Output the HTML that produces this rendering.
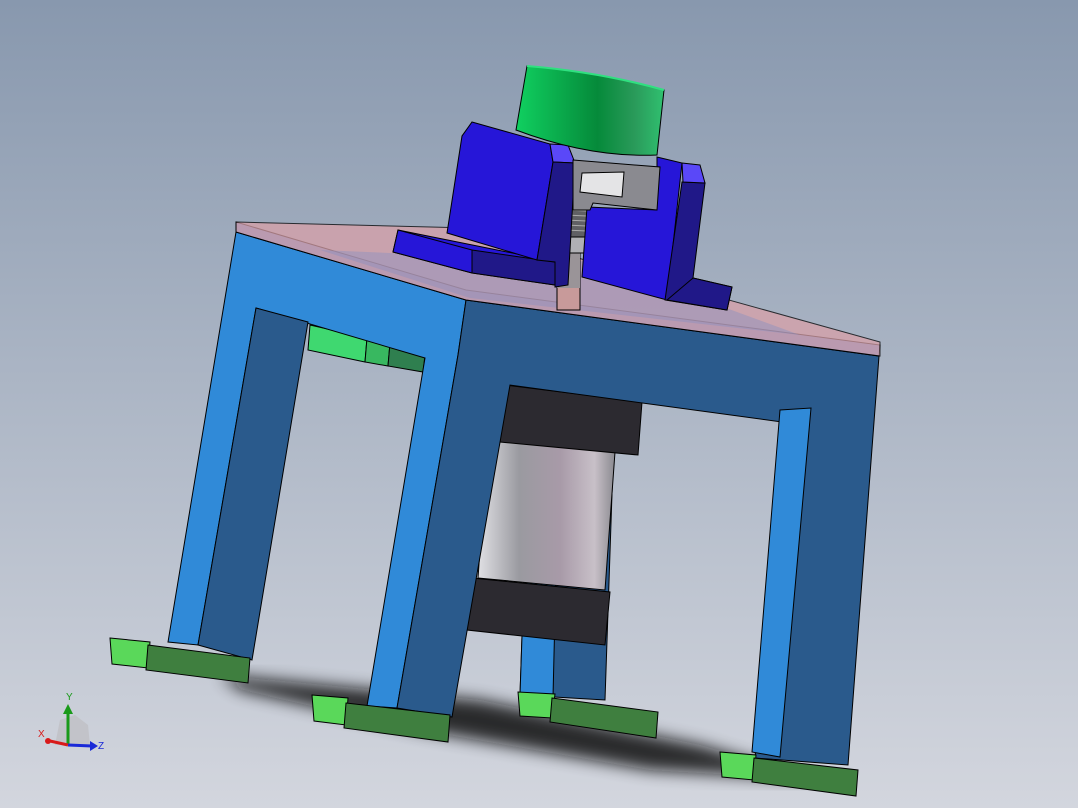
<!DOCTYPE html>
<html><head><meta charset="utf-8"><style>
html,body{margin:0;padding:0;width:1078px;height:808px;overflow:hidden}
svg{display:block}
</style></head><body>
<svg width="1078" height="808" viewBox="0 0 1078 808" xmlns="http://www.w3.org/2000/svg" font-family="Liberation Sans, sans-serif">
<defs>
<linearGradient id="bg" x1="0" y1="0" x2="0" y2="1">
<stop offset="0" stop-color="#8898ae"/><stop offset="1" stop-color="#d3d6de"/></linearGradient>
<linearGradient id="cyl" x1="0" y1="0" x2="1" y2="0">
<stop offset="0" stop-color="#e0e0e4"/><stop offset="0.3" stop-color="#9a9aa0"/><stop offset="0.6" stop-color="#a89aa8"/><stop offset="0.85" stop-color="#c8c0c8"/><stop offset="1" stop-color="#8a8a90"/></linearGradient>
<linearGradient id="grn" x1="0" y1="0" x2="1" y2="0">
<stop offset="0" stop-color="#10d060"/><stop offset="0.55" stop-color="#058a3a"/><stop offset="0.8" stop-color="#2a9a5a"/><stop offset="1" stop-color="#30c070"/></linearGradient>
<filter id="blur"><feGaussianBlur stdDeviation="8"/></filter>
</defs>
<rect width="1078" height="808" fill="url(#bg)"/>
<!-- shadow -->
<polygon points="220,675 480,700 700,745 820,780 650,770 420,730 240,690" fill="#111" filter="url(#blur)" opacity="0.85"/>
<!-- back leg -->
<polygon points="530,400 615,405 605,700 520,695" fill="#2a5a8c" stroke="#000"/>
<polygon points="530,400 560,402 553,697 520,695" fill="#308ad8" stroke="#000"/>
<polygon points="518,692 555,694 552,718 520,716" fill="#5ad85a" stroke="#000"/>
<polygon points="552,698 658,712 656,738 550,722" fill="#3f7f3f" stroke="#000"/>
<!-- green block under left -->
<polygon points="310,325 367,338 365,362 308,350" fill="#3fd870" stroke="#000"/>
<polygon points="367,338 390,343 388,366 365,362" fill="#38b860" stroke="#000"/>
<polygon points="390,343 425,355 423,372 388,366" fill="#2f7f4f" stroke="#000"/>
<!-- green plate -->
<polygon points="512,372 780,405 778,418 510,385" fill="#3a8a4a" stroke="#000"/>
<!-- cylinder -->
<polygon points="488,440 615,452 605,590 478,578" fill="url(#cyl)" stroke="#000"/>
<polygon points="505,385 642,402 638,455 500,442" fill="#2c2a30" stroke="#000"/>
<polygon points="472,578 610,592 605,645 467,630" fill="#2c2a30" stroke="#000"/>
<!-- frame: left face -->
<polygon points="236,232 466,300 458,355 397,708 367,706 425,358 256,308 198,645 168,642" fill="#308ad8" stroke="#000"/>
<polygon points="256,308 308,322 252,660 198,645" fill="#2a5a8c" stroke="#000"/>
<!-- right face -->
<polygon points="466,300 879,356 848,765 755,758 782,422 510,385 452,717 397,708 458,355" fill="#2a5a8c" stroke="#000"/>
<polygon points="780,410 811,408 780,757 752,752" fill="#308ad8" stroke="#000"/>
<!-- top plate (translucent) -->
<polygon points="236,222 466,290 880,345 879,356 466,300 236,232" fill="#6088c8" stroke="#000"/>
<polygon points="236,222 470,228 880,342 880,356 466,300 236,232" fill="#d8a0a8" opacity="0.75" stroke="#000"/>
<polygon points="320,250 600,262 800,335 470,298" fill="#8a90c0" opacity="0.45"/>
<!-- feet -->
<polygon points="110,638 150,642 148,668 112,664" fill="#5ad85a" stroke="#000"/>
<polygon points="148,645 250,658 248,683 146,670" fill="#3f7f3f" stroke="#000"/>
<polygon points="312,695 348,698 346,725 314,721" fill="#5ad85a" stroke="#000"/>
<polygon points="346,703 450,715 448,742 344,728" fill="#3f7f3f" stroke="#000"/>
<polygon points="720,752 756,755 754,780 722,777" fill="#5ad85a" stroke="#000"/>
<polygon points="754,758 858,770 856,796 752,782" fill="#3f7f3f" stroke="#000"/>
<!-- shaft -->
<rect x="557" y="253" width="23" height="57" fill="#c89a9a" stroke="#000"/>
<rect x="557" y="253" width="23" height="35" fill="#9a9498"/>
<rect x="563" y="237" width="22" height="16" fill="#b0b0b4" stroke="#000"/>
<rect x="565" y="200" width="22" height="37" fill="#606064" stroke="#000"/>
<g stroke="#aaa" stroke-width="1"><line x1="565" y1="205" x2="587" y2="206"/><line x1="565" y1="210" x2="587" y2="211"/><line x1="565" y1="215" x2="587" y2="216"/><line x1="565" y1="220" x2="587" y2="221"/><line x1="565" y1="225" x2="587" y2="226"/><line x1="565" y1="230" x2="587" y2="231"/></g>
<!-- left bracket -->
<polygon points="398,230 537,258 555,285 472,273 393,252" fill="#2616d8" stroke="#000"/>
<polygon points="472,250 555,262 555,285 472,273" fill="#201888" stroke="#000"/>
<polygon points="393,252 472,273 472,250 398,230" fill="#2616d8" stroke="#000"/>
<polygon points="472,122 550,144 553,162 537,260 447,233 462,136" fill="#2616d8" stroke="#000"/>
<polygon points="550,144 568,145 575,163 553,162" fill="#5a48f8" stroke="#000"/>
<polygon points="553,162 575,163 568,285 555,287 555,262 537,260" fill="#201888" stroke="#000"/>
<!-- right bracket -->
<polygon points="587,207 657,210 657,157 682,163 667,300 582,277" fill="#2616d8" stroke="#000"/>
<polygon points="682,182 705,183 693,278 732,287 727,310 665,300" fill="#201888" stroke="#000"/>
<polygon points="682,163 700,165 705,183 683,182" fill="#5a48f8" stroke="#000"/>
<polygon points="693,278 732,287 727,310 667,300" fill="#201888" stroke="#000"/>
<!-- gray block -->
<polygon points="573,160 660,167 657,210 593,203 590,210 573,210" fill="#8a8a90" stroke="#000"/>
<polygon points="582,173 624,172 622,197 580,192" fill="#e4e4e6" stroke="#000"/>
<!-- green drum -->
<path d="M527,66 Q600,72 664,90 L657,155 Q590,158 516,130 Z" fill="url(#grn)" stroke="#000"/>
<path d="M527,66 Q600,72 664,90" fill="none" stroke="#30e080" stroke-width="2"/>
<!-- triad -->
<polygon points="55,745 90,745 88,725 75,715 60,720" fill="#bfbfc4" opacity="0.8"/>
<line x1="68" y1="745" x2="68" y2="712" stroke="#1a9a1a" stroke-width="3"/>
<polygon points="63,714 73,714 68,704" fill="#1a9a1a"/>
<line x1="68" y1="745" x2="92" y2="746" stroke="#1a2ad8" stroke-width="3"/>
<polygon points="90,741 90,751 98,746" fill="#1a2ad8"/>
<line x1="68" y1="745" x2="50" y2="741" stroke="#d81a1a" stroke-width="3"/>
<circle cx="48" cy="741" r="3" fill="#d81a1a"/>
<text x="66" y="700" font-size="10" fill="#1a9a1a">Y</text>
<text x="98" y="749" font-size="10" fill="#1a2ad8">Z</text>
<text x="38" y="737" font-size="10" fill="#d81a1a">X</text>
</svg>
</body></html>
